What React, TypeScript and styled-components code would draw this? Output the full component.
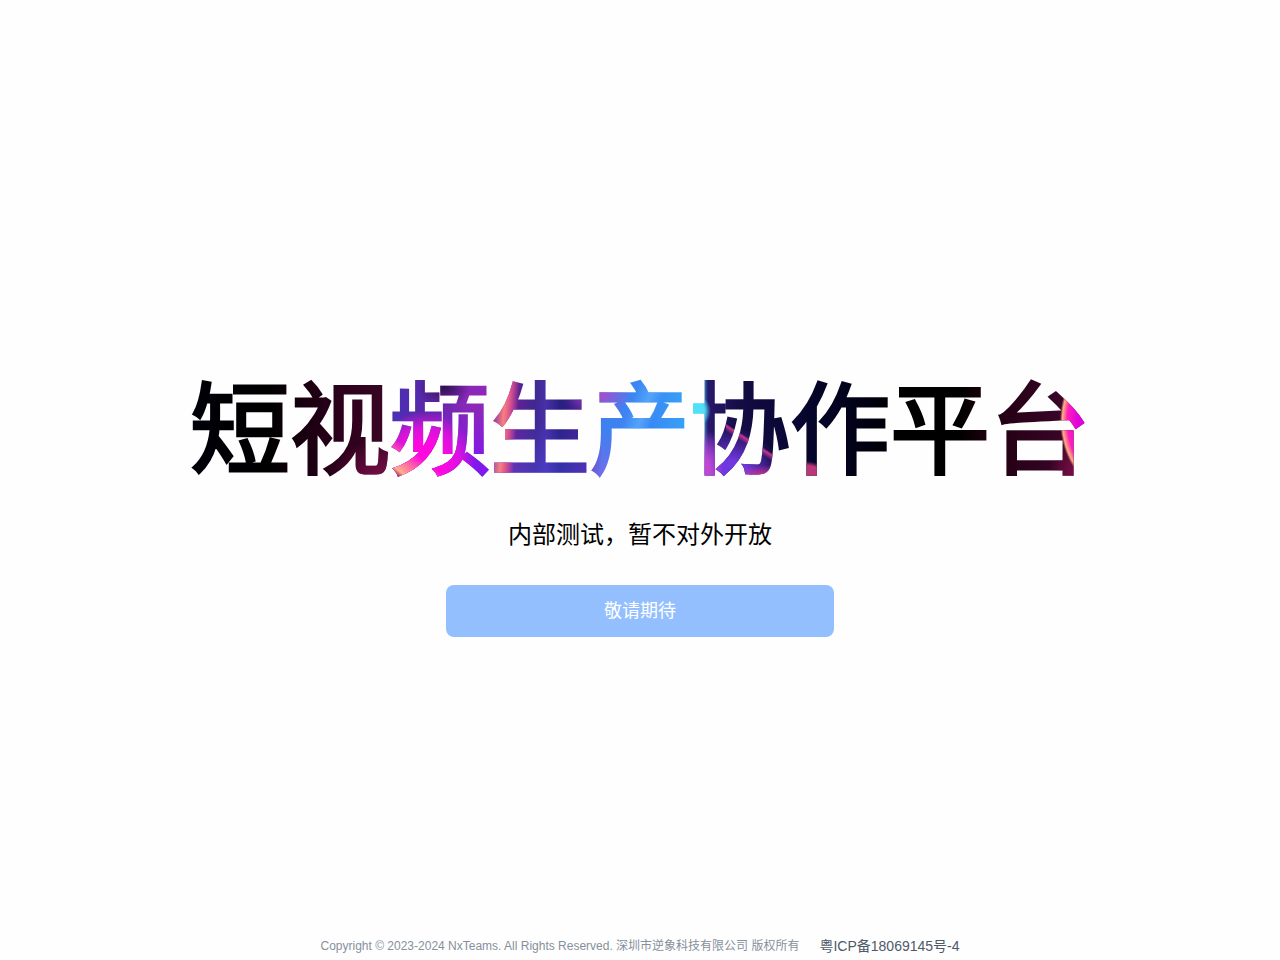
import React from "react";
import styled, { createGlobalStyle } from "styled-components";

const GlobalStyle = createGlobalStyle`
  body {
    margin: 0;
    background: #fefefe;
    font-family: "Liberation Sans", "Noto Sans CJK SC", sans-serif;
  }
`;

const Page = styled.div`
  min-height: 100vh;
  display: flex;
  flex-direction: column;
`;

const Hero = styled.main`
  flex: 1;
  display: flex;
  flex-direction: column;
  align-items: center;
  justify-content: center;
  padding-top: 76px;
`;

/* Nebula-like artwork, painted inside the letters only */
const Title = styled.h1`
  margin: 0;
  font-size: 100px;
  line-height: 120px;
  font-weight: 400;
  -webkit-text-stroke: 3px transparent;
  text-align: center;
  color: transparent;
  background:
    linear-gradient(38deg, #800c50 16px, #ffb08c 22px, #ff60a8 34px, transparent 46px) 199px 60px / 60px 60px no-repeat,
    radial-gradient(ellipse 26px 20px at 254px 16px, #301050, transparent),
    radial-gradient(circle at 35px 92px, #ff08e0 20px, #f010e0cc 36px, transparent 52px) 199px 0 / 101px 120px no-repeat,
    linear-gradient(94deg, transparent 304px, #f8807c 316px, #d85090 322px, transparent 330px),
    radial-gradient(ellipse 34px 22px at 408px 24px, #b048c8, transparent),
    radial-gradient(circle at 4px 40px, #50e0f8 10px, #50e0f800 17px) 500px 0 / 60px 120px no-repeat,
    linear-gradient(112deg, transparent 420px, #68b8ff99 436px, transparent 448px),
    radial-gradient(ellipse 46px 22px at 578px 116px, #d83088 50%, transparent),
    linear-gradient(213deg, transparent 40px, #c83890 42px, transparent 47px) 536px 46px / 64px 46px no-repeat,
    radial-gradient(ellipse 20px 44px at 514px 102px, #c048d0 30%, transparent),
    radial-gradient(ellipse 54px 56px at 540px 112px, #7038e0 40%, transparent),
    radial-gradient(ellipse 26px 22px at 616px 112px, #b83878 80%, transparent),
    radial-gradient(ellipse 60px 74px at 930px 50px, #e000e0 70%, #ff20b8 88%, #ffb080 96%, transparent),
    radial-gradient(ellipse 30px 44px at 888px 104px, #80104c, transparent),
    radial-gradient(ellipse 50px 46px at 190px 112px, #80104c, transparent),
    linear-gradient(180deg, transparent 40%, #5050f088) 299px 0 / 101px 120px no-repeat,
    linear-gradient(180deg, transparent 30%, #8018f0 80%) 240px 0 / 59px 120px no-repeat,
    linear-gradient(180deg, transparent 50%, #8068e8) 400px 0 / 60px 120px no-repeat,
    linear-gradient(
      90deg,
      #000008 0,
      #000000 80px,
      #16000e 110px,
      #2c001c 150px,
      #340420 184px,
      #3c0828 198px,
      #4830b8 200px,
      #5828a8 235px,
      #8828b8 276px,
      #9028b8 299px,
      #682098 322px,
      #402890 345px,
      #4830a8 356px,
      #282080 370px,
      #502098 398px,
      #4080f0 412px,
      #3888f4 460px,
      #38a0f8 494px,
      #48d8fc 511px,
      #28186c 518px,
      #140c44 550px,
      #060630 610px,
      #000010 680px,
      #000000 710px,
      #000000 770px,
      #20000f 800px,
      #340424 860px,
      #500830 900px
    );
  /* Keeps the artwork aligned with the letters at any window width */
  width: max-content;
  background-clip: text;
  -webkit-background-clip: text;
`;

const Subtitle = styled.p`
  margin: 26px 0 32px;
  font-size: 24px;
  line-height: 36px;
  color: #000;
`;

const WaitButton = styled.button`
  width: 388px;
  max-width: 100%;
  height: 52px;
  border: 0;
  border-radius: 8px;
  background: #94bfff;
  color: #fff;
  font-family: inherit;
  font-size: 18px;
  line-height: 28px;
`;

const Footer = styled.footer`
  display: flex;
  align-items: center;
  justify-content: center;
  gap: 20px;
  height: 28px;
  color: #86909c;
  font-size: 12px;
  line-height: 20px;
`;

const RecordLink = styled.a`
  color: #4e5969;
  font-size: 14px;
  text-decoration: none;
`;

export default function App() {
  return (
    <Page>
      <GlobalStyle />
      <Hero>
        <Title>短视频生产协作平台</Title>
        <Subtitle>内部测试，暂不对外开放</Subtitle>
        <WaitButton type="button" disabled>敬请期待</WaitButton>
      </Hero>
      <Footer>
        <span>Copyright © 2023-2024 NxTeams. All Rights Reserved. 深圳市逆象科技有限公司 版权所有</span>
        <RecordLink href="https://beian.miit.gov.cn/">粤ICP备18069145号-4</RecordLink>
      </Footer>
    </Page>
  );
}
